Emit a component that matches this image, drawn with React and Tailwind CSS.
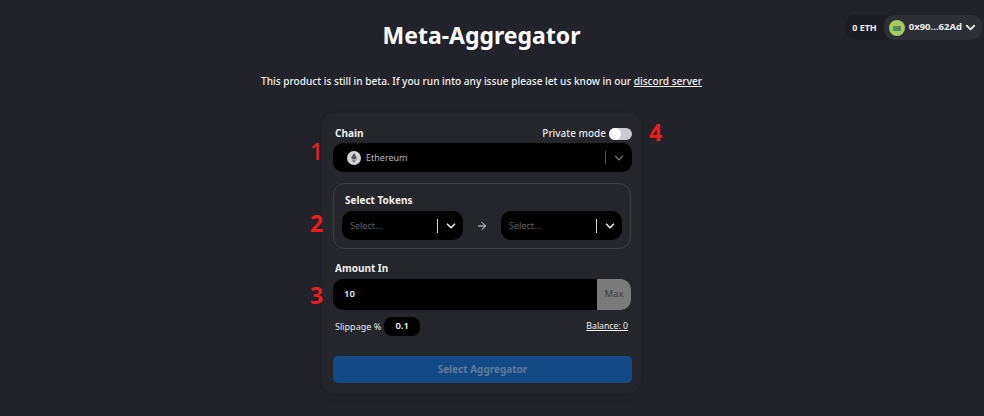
import { ChevronDown, ArrowRight } from "lucide-react";

function TokenSelect() {
    return (
        <div className="flex h-[29px] w-[121px] items-center rounded-[10px] bg-black pl-2">
            <span className="flex-1 text-[9px] text-[#5f6066]">Select...</span>
            <span className="h-[14px] w-px bg-[#d8d8d8]"/>
            <span className="flex w-[25px] justify-center text-[#e4e4e4]"><ChevronDown size={14} strokeWidth={3}/></span>
        </div>
    );
}

function EthIcon() {
    return (
        <svg width="14" height="14" viewBox="0 0 14 14" className="shrink-0">
            <circle cx="7" cy="7" r="7" fill="#d4d4d6"/>
            <path d="M7 2 L10 7 L7 8.8 L4 7 Z" fill="#55565a"/>
            <path d="M7 9.6 L10 7.8 L7 12 L4 7.8 Z" fill="#77787c"/>
        </svg>
    );
}

export default function App() {
    return (
        <div className="relative h-[416px] w-[984px] overflow-hidden bg-[#22232a] text-white" style={{ fontFamily: '"Noto Sans", "Open Sans", sans-serif' }}>
            {/* wallet */}
            <div className="absolute right-[2px] top-[15px] flex h-[25px] items-center rounded-[10px] bg-[#1c1d22]">
                <span className="px-[7px] text-[9px] font-bold text-[#eeeeee]">0 ETH</span>
                <div className="flex h-[25px] items-center rounded-[10px] bg-[#2d2f36] pl-[5px] pr-[4px]">
                    <svg width="16" height="16" viewBox="0 0 16 16" className="shrink-0">
                        <circle cx="8" cy="8" r="8" fill="#a9c95a"/>
                        <rect x="4" y="6" width="8" height="5" fill="#3f9a62"/>
                        <rect x="8" y="6" width="3" height="3" fill="#b5534f"/>
                    </svg>
                    <span className="ml-1 text-[9.5px] font-bold text-[#eeeeee]">0x90...62Ad</span>
                    <ChevronDown size={15} strokeWidth={3} className="ml-[1px] text-[#eeeeee]"/>
                </div>
            </div>

            <div className="flex w-[963px] flex-col items-center">
                <h1 className="mt-[17px] text-[23px] font-bold leading-[36px]">Meta-Aggregator</h1>
                <p className="mt-[19px] text-[10.1px] font-medium leading-[18px] text-[#f2f2f2]">
                    This product is still in beta. If you run into any issue please let us know in our <a className="underline">discord server</a>
                </p>

                <div className="relative mt-[23px] h-[280px] w-[319px] rounded-[12px] bg-[#25262c] pl-[11px] pr-[9px] pt-[11px] shadow-[0_0_12px_rgba(0,0,0,0.12)]">
                    <div className="flex h-[19px] items-center justify-between">
                        <label className="ml-[2px] text-[10px] font-bold text-[#f0f0f0]">Chain</label>
                        <div className="flex items-center gap-[3px]">
                            <span className="text-[10px] font-medium text-[#e6e6e6]">Private mode</span>
                            <span className="flex h-[12px] w-[23px] items-center rounded-full bg-[#c9ccd3]">
                                <span className="h-[12px] w-[12px] rounded-full bg-white"/>
                            </span>
                        </div>
                    </div>

                    <div className="flex h-[29px] items-center rounded-[10px] bg-black pl-[14px]">
                        <EthIcon/>
                        <span className="ml-[5px] flex-1 pt-px text-[9px] text-[#b8b8bb]">Ethereum</span>
                        <span className="h-[13px] w-px bg-[#55565a]"/>
                        <span className="flex w-[26px] justify-center text-[#6d6e72]"><ChevronDown size={14} strokeWidth={2.5}/></span>
                    </div>

                    <div className="mt-[11px] h-[66px] w-[298px] rounded-[12px] border border-[#3d3f45] px-[8px] pt-[8px]">
                        <div className="ml-[3px] h-[19px] text-[10px] font-bold leading-[16px] text-[#f0f0f0]">Select Tokens</div>
                        <div className="flex items-center justify-between">
                            <TokenSelect/>
                            <ArrowRight size={12} strokeWidth={2} className="text-[#e4e4e4]"/>
                            <TokenSelect/>
                        </div>
                    </div>

                    <label className="mt-[11px] ml-[2px] block h-[19px] text-[10px] font-bold leading-[16px] text-[#f0f0f0]">Amount In</label>
                    <div className="flex h-[31px] w-[298px] overflow-hidden rounded-[10px] bg-black">
                        <input readOnly value="10" className="min-w-0 flex-1 bg-transparent pl-[11px] text-[9.5px] font-semibold text-[#f0f0f0] outline-none"/>
                        <span className="flex w-[34px] items-center justify-center bg-[#7a7a7a] text-[9.5px] text-[#3e3e3e]">Max</span>
                    </div>

                    <div className="mt-[7px] flex h-[19px] items-center justify-between pl-[2px] pr-[4px]">
                        <div className="flex items-center gap-[3px]">
                            <span className="text-[9px] text-[#e6e6e6]">Slippage %</span>
                            <span className="flex h-[19px] w-[36px] items-center justify-center rounded-[8px] bg-black text-[9.5px] font-semibold text-[#f0f0f0]">0.1</span>
                        </div>
                        <a className="text-[8.7px] text-[#f0f0f0] underline">Balance: 0</a>
                    </div>

                    <button className="mt-[20px] h-[27px] w-[299px] rounded-[5px] bg-[#134a86] text-[10px] font-bold text-[#5f7a98]">Select Aggregator</button>

                    {/* red annotation numbers */}
                    <span className="absolute left-[-12px] top-[25px] text-[23px] font-medium leading-[26px] text-[#e5201f]">1</span>
                    <span className="absolute left-[-12px] top-[97px] text-[23px] font-bold leading-[26px] text-[#ed1c1c]">2</span>
                    <span className="absolute left-[-12px] top-[169px] text-[23px] font-bold leading-[26px] text-[#ed1c1c]">3</span>
                    <span className="absolute left-[327px] top-[6px] text-[23px] font-bold leading-[26px] text-[#ed1c1c]">4</span>
                </div>
            </div>
        </div>
    );
}
